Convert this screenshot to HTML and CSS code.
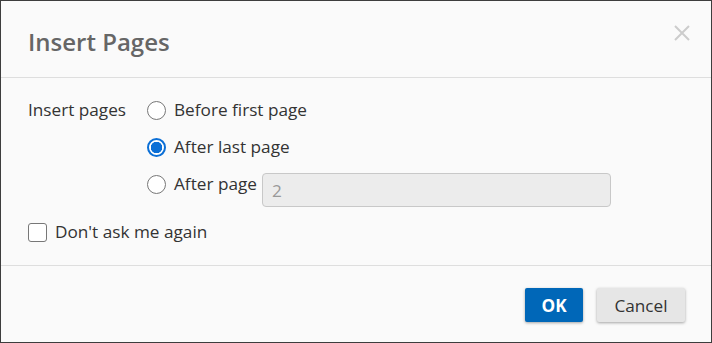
FILE: index.html
```html
<!DOCTYPE html>
<html>
<head>
<meta charset="utf-8">
<link rel="stylesheet" href="styles.css">
</head>
<body>
<div class="dialog">
  <div class="header">
    <h1 class="title">Insert Pages</h1>
    <button class="close" aria-label="Close">
      <svg width="16" height="16" viewBox="0 0 16 16"><path d="M1 1 L15 15 M15 1 L1 15" stroke="#cccccc" stroke-width="2" fill="none"/></svg>
    </button>
  </div>
  <div class="content">
    <div class="group">
      <div class="group-label">Insert pages</div>
      <div class="options">
        <label class="option"><input type="radio" name="pos" class="radio"><span>Before first page</span></label>
        <label class="option"><input type="radio" name="pos" class="radio" checked><span>After last page</span></label>
        <label class="option"><input type="radio" name="pos" class="radio"><span>After page</span><input type="text" class="page-input" value="2" disabled></label>
      </div>
    </div>
    <label class="option check-row"><input type="checkbox" class="check"><span>Don't ask me again</span></label>
  </div>
  <div class="footer">
    <button class="btn btn-primary">OK</button>
    <button class="btn btn-secondary">Cancel</button>
  </div>
</div>
</body>
</html>
```
FILE: styles.css
```css
* { box-sizing: border-box; }
html, body { margin: 0; padding: 0; }
body {
  font-family: "Open Sans", "Liberation Sans", sans-serif;
  font-size: 17.2px;
  color: #333;
  background: #fafafa;
}
.dialog {
  width: 712px;
  height: 343px;
  border: 1px solid #3d3d3d;
  background: #fafafa;
  display: flex;
  flex-direction: column;
}
.header {
  height: 77px;
  border-bottom: 1px solid #dedede;
  display: flex;
  align-items: center;
  justify-content: space-between;
  padding: 0 21px 0 27px;
}
.title {
  margin: 0;
  font-size: 24px;
  font-weight: 600;
  color: #666;
  line-height: 30px;
  padding-top: 9px;
  padding-bottom: 3px;
}
.close {
  background: none;
  border: 0;
  padding: 0;
  width: 16px;
  height: 16px;
  margin-bottom: 12px;
  margin-top: 0;
}
.content {
  padding: 19px 27px 20px;
  border-bottom: 1px solid #dedede;
  display: flex;
  flex-direction: column;
  gap: 12px;
}
.group {
  display: flex;
}
.group-label {
  width: 119px;
  line-height: 26px;
}
.options {
  display: flex;
  flex-direction: column;
  gap: 11px;
}
.option {
  display: flex;
  align-items: flex-start;
  line-height: 26px;
}
.option > span { white-space: nowrap; }
.radio {
  appearance: none;
  -webkit-appearance: none;
  margin: 4px 8px 0 0;
  width: 19px;
  height: 19px;
  border: 1px solid #777;
  border-radius: 50%;
  background: #fff;
  flex: none;
}
.radio:checked {
  border: 2px solid #0b6fd6;
  background: radial-gradient(circle, #0b6fd6 0 5.5px, #fff 6px);
}
.page-input {
  margin: 2px 0 0 5px;
  width: 349px;
  height: 34px;
  border: 1px solid #c8c8c8;
  border-radius: 4px;
  background: #ececec;
  color: #999;
  font: inherit;
  padding: 0 9px;
}
.check {
  appearance: none;
  -webkit-appearance: none;
  margin: 4px 8px 0 0;
  width: 19px;
  height: 19px;
  border: 1px solid #777;
  border-radius: 3px;
  background: #fff;
  flex: none;
}
.footer {
  flex: 1;
  display: flex;
  justify-content: flex-end;
  align-items: flex-start;
  gap: 14px;
  padding: 22px 26px 0 0;
}
.btn {
  height: 34px;
  border: 0;
  border-radius: 2px;
  font-family: inherit;
  font-size: 17.2px;
  box-shadow: 0 1px 3px rgba(0,0,0,0.35);
  cursor: pointer;
}
.btn-primary {
  width: 58px;
  background: #0067b8;
  color: #fff;
  font-weight: 700;
}
.btn-secondary {
  width: 88px;
  background: #e6e6e6;
  color: #333;
}
```
